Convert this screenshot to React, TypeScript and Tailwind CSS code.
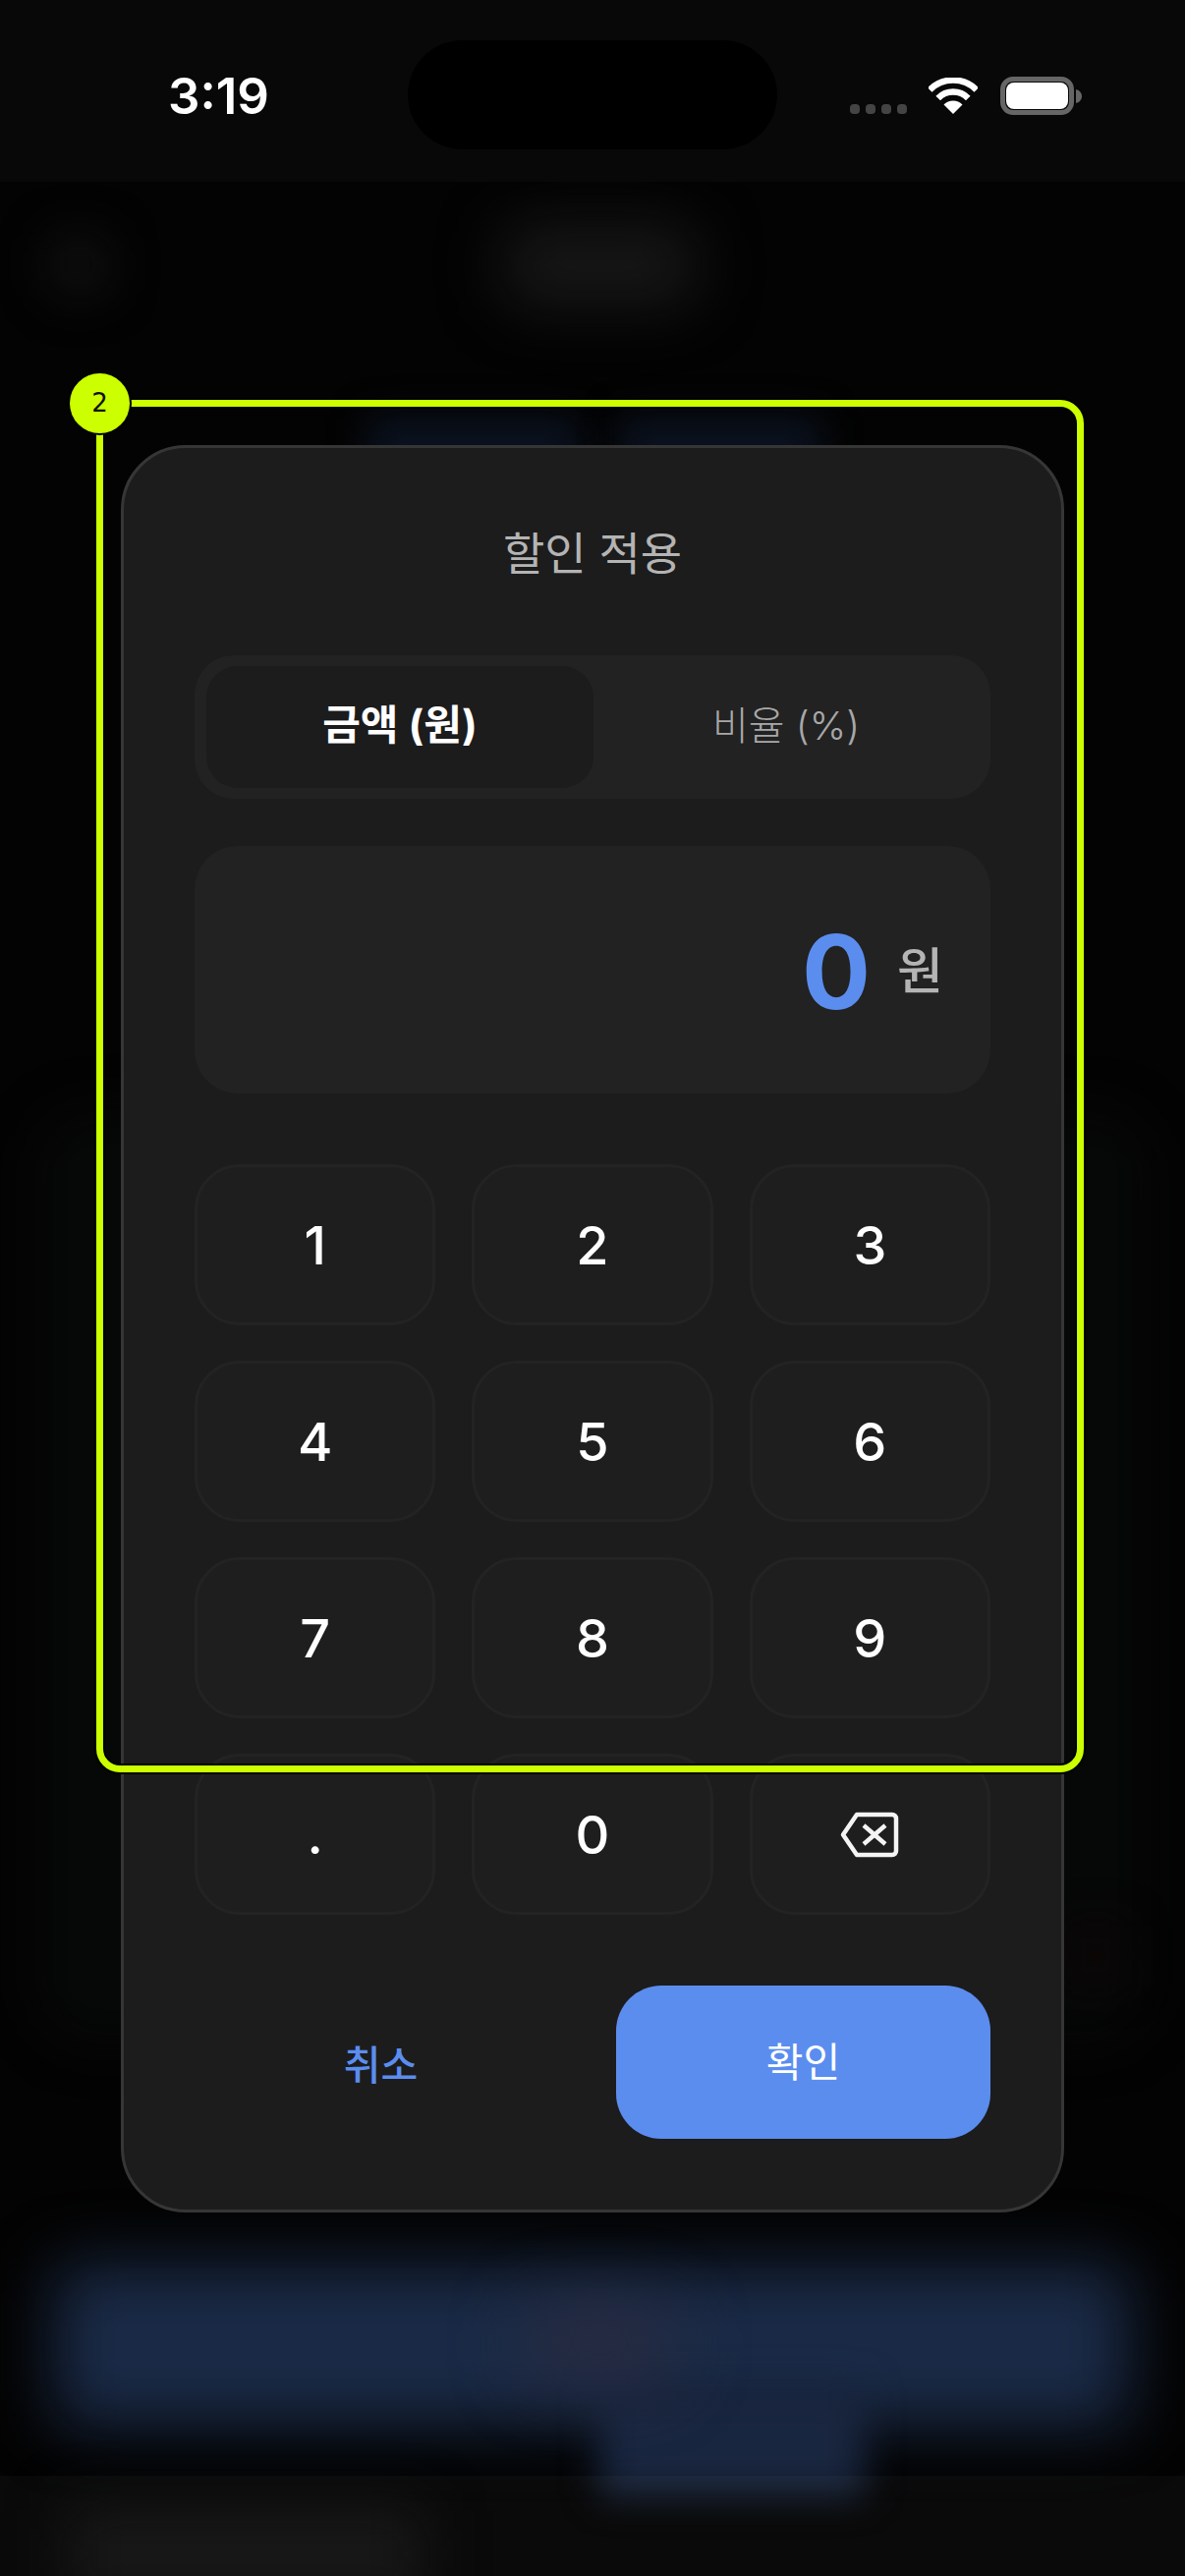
const font = "font-['Inter','Noto_Sans_CJK_KR',sans-serif]";

function Wifi() {
  return (
    <svg width="50" height="37" viewBox="0 0 50 37" fill="none">
      <path d="M1.2 12.5 A33.5 33.5 0 0 1 48.8 12.5" stroke="#fff" strokeWidth="6.5" />
      <path d="M9.7 21 A21.5 21.5 0 0 1 40.3 21" stroke="#fff" strokeWidth="6.5" />
      <path d="M25 37 L15.5 27.5 A13.5 13.5 0 0 1 34.5 27.5 Z" fill="#fff" />
    </svg>
  );
}

function Battery() {
  return (
    <div className="flex items-center">
      <div className="w-[75px] h-[39px] rounded-[13px] border-[5px] border-[#666] p-[1px] flex">
        <div className="flex-1 rounded-[8px] bg-white" />
      </div>
      <svg width="6" height="14" viewBox="0 0 6 14" className="ml-[2px]">
        <path d="M0 0 C4 1 6 4 6 7 C6 10 4 13 0 14 Z" fill="#666" />
      </svg>
    </div>
  );
}

function Backspace() {
  return (
    <svg width="60" height="47" viewBox="0 0 60 47" fill="none" stroke="#f4f4f4" strokeWidth="4.5">
      <path d="M17 3 H53 A4 4 0 0 1 57 7 V40 A4 4 0 0 1 53 44 H17 L3 23.5 Z" strokeLinejoin="round" />
      <path d="M24 14 L46 33 M46 14 L24 33" />
    </svg>
  );
}

function Key({ children }: { children: React.ReactNode }) {
  return (
    <div className="h-[164px] rounded-[46px] border-[3px] border-[#232323] bg-[#1e1e1e] flex items-center justify-center text-[54px] font-medium text-white">
      {children}
    </div>
  );
}

function Backdrop() {
  return (
    <div className="absolute inset-0 overflow-hidden bg-[#030303]">
      <div className="absolute left-[510px] top-[228px] w-[200px] h-[84px] rounded-[30px] bg-[#171717] blur-[30px]" />
      <div className="absolute left-[48px] top-[238px] w-[64px] h-[64px] rounded-[16px] bg-[#0e0e0e] blur-[22px]" />
      <div className="absolute left-[375px] top-[425px] w-[215px] h-[60px] bg-[#0b1220] blur-[18px]" />
      <div className="absolute left-[630px] top-[425px] w-[205px] h-[60px] bg-[#0b1220] blur-[18px]" />
      <div className="absolute left-[35px] right-[35px] top-[1130px] h-[950px] rounded-[60px] bg-[#060707] blur-[24px]" />
      <div className="absolute left-[1085px] top-[1960px] w-[60px] h-[60px] bg-[#0b0707] blur-[20px]" />
      <div className="absolute left-[55px] top-[2305px] w-[1095px] h-[165px] rounded-[20px] bg-[#1a2a46] blur-[32px]" />
      <div className="absolute left-[610px] top-[2430px] w-[270px] h-[110px] bg-[#19263f] blur-[18px]" />
      <div className="absolute left-[530px] top-[2345px] w-[160px] h-[80px] rounded-full bg-[#272b40] blur-[34px]" />
      <div className="absolute left-[70px] top-[2555px] w-[360px] h-[90px] bg-[#121212] blur-[30px]" />
      <div className="absolute left-0 right-0 top-0 h-[185px] bg-[#080808]" />
      <div className="absolute left-0 right-0 top-[2520px] bottom-0 bg-white/[0.03]" />
    </div>
  );
}

function Annotation() {
  return (
    <>
      <div className="absolute left-[98px] top-[407px] w-[1005px] h-[1397px] rounded-[24px] border-[7px] border-[#ccff00] shadow-[0_0_0_2px_#000,inset_0_0_0_2px_#000]" />
      <div className="absolute left-[71px] top-[380px] w-[61px] h-[61px] rounded-full bg-[#ccff00] shadow-[0_0_0_2px_#000] flex items-center justify-center text-[26px] text-[#111] font-['DejaVu_Sans',sans-serif]">
        2
      </div>
    </>
  );
}

export default function App() {
  return (
    <div className={`relative w-[1206px] h-[2622px] overflow-hidden ${font}`}>
      <Backdrop />
      <div className="relative flex flex-col">
        <div className="h-[185px] flex items-start">
          <div className="w-[415px] pt-[68px] pl-[171px] text-[51px] leading-[60px] font-semibold text-white">3:19</div>
          <div className="mt-[41px] w-[376px] h-[111px] rounded-full bg-black" />
          <div className="flex-1 flex items-start pl-[74px] pt-[78px]">
            <div className="flex gap-[6px] mt-[28px]">
              <span className="w-[10px] h-[10px] rounded-[4px] bg-[#444]" />
              <span className="w-[10px] h-[10px] rounded-[4px] bg-[#444]" />
              <span className="w-[10px] h-[10px] rounded-[4px] bg-[#444]" />
              <span className="w-[10px] h-[10px] rounded-[4px] bg-[#444]" />
            </div>
            <div className="ml-[22px] mt-[1px]"><Wifi /></div>
            <div className="ml-[23px]"><Battery /></div>
          </div>
        </div>

        <div className="ml-[123px] mt-[268px] w-[960px] h-[1799px] rounded-[66px] border-[3px] border-[#363636] bg-[#1c1c1c] px-[72px] pt-[77px]">
          <div className="text-center text-[46px] leading-[60px] text-[#b4b4b4]">할인 적용</div>

          <div className="mt-[74px] h-[146px] rounded-[40px] bg-[#222] px-[12px] py-[11px] flex">
            <div className="w-[394px] rounded-[32px] bg-[#1c1c1c] flex items-center justify-center pb-[6px] text-[42px] font-bold text-white">금액 (원)</div>
            <div className="flex-1 flex items-center justify-center pb-[2px] text-[40px] font-light text-[#a8a8a8]">비율 (%)</div>
          </div>

          <div className="mt-[48px] h-[252px] rounded-[44px] bg-[#222] flex items-center justify-end pt-[3px] pr-[48px] gap-[27px]">
            <span className="text-[104px] leading-[120px] font-bold text-[#5b8def]">0</span>
            <span className="text-[51px] leading-[60px] font-medium text-[#b4b4b4]">원</span>
          </div>

          <div className="mt-[72px] grid grid-cols-3 gap-x-[37px] gap-y-[36px]">
            {["1", "2", "3", "4", "5", "6", "7", "8", "9", ".", "0"].map((k) => (
              <Key key={k}>{k}</Key>
            ))}
            <Key><Backspace /></Key>
          </div>

          <div className="mt-[72px] h-[156px] flex gap-[50px]">
            <div className="w-[379px] flex items-center justify-center pt-[8px] text-[41px] font-medium text-[#5b8def]">취소</div>
            <div className="flex-1 rounded-[46px] bg-[#5b8def] flex items-center justify-center pt-[2px] text-[41px] text-white">확인</div>
          </div>
        </div>
      </div>
      <Annotation />
    </div>
  );
}
